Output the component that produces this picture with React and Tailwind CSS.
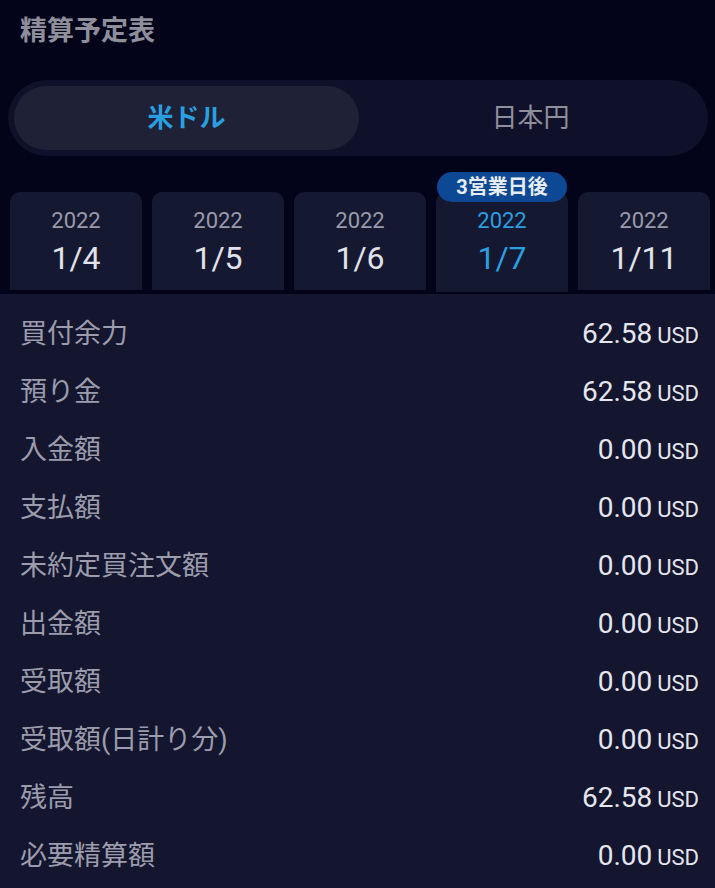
import React, { useState } from "react";

const dates = [
  { year: "2022", day: "1/4" },
  { year: "2022", day: "1/5" },
  { year: "2022", day: "1/6" },
  { year: "2022", day: "1/7", badge: "3営業日後" },
  { year: "2022", day: "1/11" },
];

const rows = [
  ["買付余力", "62.58"],
  ["預り金", "62.58"],
  ["入金額", "0.00"],
  ["支払額", "0.00"],
  ["未約定買注文額", "0.00"],
  ["出金額", "0.00"],
  ["受取額", "0.00"],
  ["受取額(日計り分)", "0.00"],
  ["残高", "62.58"],
  ["必要精算額", "0.00"],
];

const font = "font-['Roboto','Noto_Sans_CJK_JP',sans-serif]";

export default function App() {
  const [currency, setCurrency] = useState("usd");
  const [selected, setSelected] = useState(3);

  return (
    <div className={`min-h-screen w-[715px] bg-[#03041a] ${font}`}>
      {/* Title */}
      <div className="px-[20px] pt-[13px] h-[80px]">
        <h1 className="text-[27px] leading-[36px] font-bold text-[#8f8f9c]">精算予定表</h1>
      </div>

      {/* Currency toggle */}
      <div className="mx-[8px] mr-[7px] h-[76px] rounded-full bg-[#0f1029] p-[6px] flex">
        <button
          onClick={() => setCurrency("usd")}
          className={`w-[345px] h-full rounded-full text-[26px] ${
            currency === "usd" ? "bg-[#1f2137] text-[#2a9fe0] font-bold" : "text-[#8f8f9c]"
          }`}
        >
          米ドル
        </button>
        <button
          onClick={() => setCurrency("jpy")}
          className={`flex-1 h-full rounded-full text-[26px] ${
            currency === "jpy" ? "bg-[#1f2137] text-[#2a9fe0] font-bold" : "text-[#8f8f9c]"
          }`}
        >
          日本円
        </button>
      </div>

      {/* Date tabs */}
      <div className="mt-[36px] pl-[10px] flex items-start gap-[10px]">
        {dates.map((d, i) => {
          const active = i === selected;
          return (
            <div
              key={d.day}
              onClick={() => setSelected(i)}
              className={`relative w-[132px] rounded-t-[10px] bg-[#151831] flex flex-col items-center pt-[16px] ${
                active ? "h-[100px]" : "h-[98px]"
              }`}
            >
              {d.badge && (
                <div className="absolute top-[-20px] left-[1px] right-[1px] h-[30px] rounded-full bg-[#0c4894] flex items-center justify-center text-[20px] font-bold text-[#e8ecf6]">
                  {d.badge}
                </div>
              )}
              <span className={`text-[22px] leading-[26px] ${active ? "text-[#2a9fe0]" : "text-[#9a9aaa]"}`}>
                {d.year}
              </span>
              <span className={`text-[32px] leading-[40px] mt-[4px] ${active ? "text-[#2a9fe0]" : "text-[#e2e2ea]"}`}>
                {d.day}
              </span>
            </div>
          );
        })}
      </div>

      {/* Settlement rows */}
      <div className="mt-[2px] bg-[#13162e] pt-[11px] pb-[4px]">
        {rows.map(([label, value]) => (
          <div key={label} className="h-[58px] flex items-center justify-between pl-[20px] pr-[16px]">
            <span className="text-[27px] text-[#9c9cad]">{label}</span>
            <span className="flex items-baseline gap-[5px] text-[#e6e6ee]">
              <span className="text-[28px]">{value}</span>
              <span className="text-[22px]">USD</span>
            </span>
          </div>
        ))}
      </div>
    </div>
  );
}
